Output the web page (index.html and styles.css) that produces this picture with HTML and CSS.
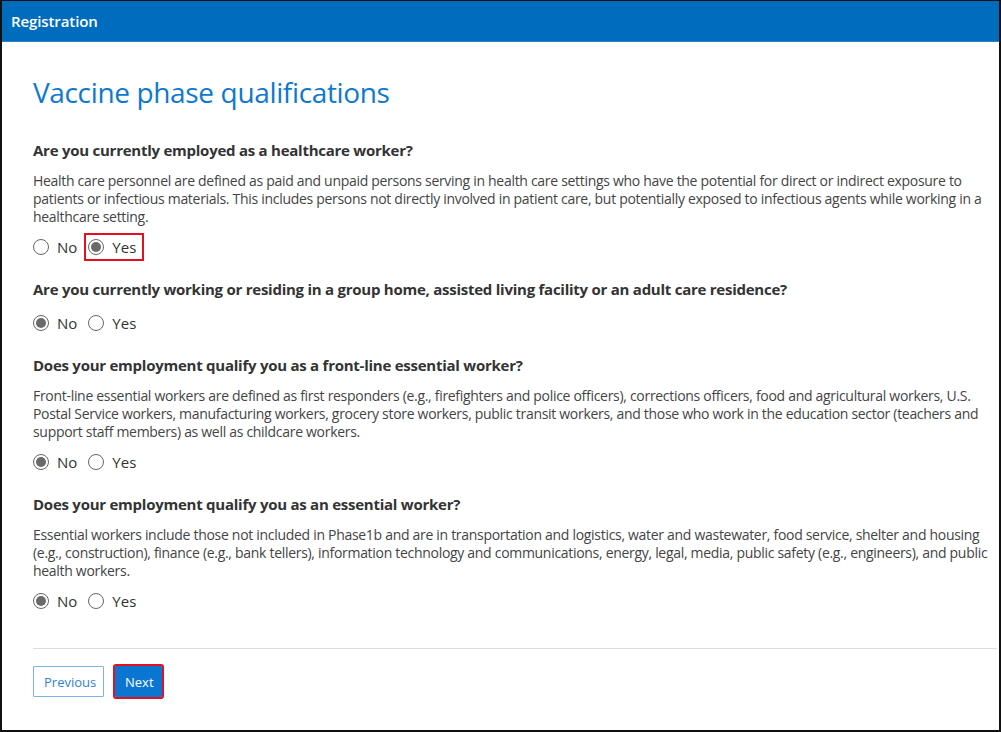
FILE: index.html
```html
<!DOCTYPE html>
<html lang="en">
<head>
<meta charset="utf-8">
<title>Registration</title>
<link rel="stylesheet" href="styles.css">
</head>
<body>
<div class="frame">
  <header class="topbar">Registration</header>
  <main class="content">
    <h1 class="title">Vaccine phase qualifications</h1>

    <section class="question">
      <h2 class="q-label">Are you currently employed as a healthcare worker?</h2>
      <p class="q-desc">Health care personnel are defined as paid and unpaid persons serving in health care settings who have the potential for direct or indirect exposure to patients or infectious materials. This includes persons not directly involved in patient care, but potentially exposed to infectious agents while working in a healthcare setting.</p>
      <div class="radios">
        <label class="radio"><span class="dot"></span>No</label>
        <label class="radio highlighted"><span class="dot checked"></span>Yes</label>
      </div>
    </section>

    <section class="question">
      <h2 class="q-label">Are you currently working or residing in a group home, assisted living facility or an adult care residence?</h2>
      <div class="radios">
        <label class="radio"><span class="dot checked"></span>No</label>
        <label class="radio"><span class="dot"></span>Yes</label>
      </div>
    </section>

    <section class="question">
      <h2 class="q-label">Does your employment qualify you as a front-line essential worker?</h2>
      <p class="q-desc">Front-line essential workers are defined as first responders (e.g., firefighters and police officers), corrections officers, food and agricultural workers, U.S. Postal Service workers, manufacturing workers, grocery store workers, public transit workers, and those who work in the education sector (teachers and support staff members) as well as childcare workers.</p>
      <div class="radios">
        <label class="radio"><span class="dot checked"></span>No</label>
        <label class="radio"><span class="dot"></span>Yes</label>
      </div>
    </section>

    <section class="question">
      <h2 class="q-label">Does your employment qualify you as an essential worker?</h2>
      <p class="q-desc">Essential workers include those not included in Phase1b and are in transportation and logistics, water and wastewater, food service, shelter and housing (e.g., construction), finance (e.g., bank tellers), information technology and communications, energy, legal, media, public safety (e.g., engineers), and public health workers.</p>
      <div class="radios">
        <label class="radio"><span class="dot checked"></span>No</label>
        <label class="radio"><span class="dot"></span>Yes</label>
      </div>
    </section>

    <div class="actions">
      <button class="btn btn-secondary" type="button">Previous</button>
      <button class="btn btn-primary highlighted-btn" type="button">Next</button>
    </div>
  </main>
</div>
</body>
</html>
```

FILE: styles.css
```css
* { box-sizing: border-box; }
html, body { margin: 0; padding: 0; background: #fff; }
body {
  font-family: "Open Sans", "Noto Sans", "Liberation Sans", sans-serif;
  color: #333;
}
.frame {
  width: 1001px;
  height: 732px;
  border: 2px solid #111;
  border-top-width: 1px;
  overflow: hidden;
  background: #fff;
}
.topbar {
  height: 41px;
  background: #006cbe;
  border-bottom: 1px solid #2a82cc;
  color: #fff;
  font-size: 15px;
  font-weight: 600;
  line-height: 40px;
  padding-left: 9px;
  letter-spacing: -0.1px;
}
.content {
  padding: 32px 2px 0 31px;
}
.title {
  margin: 0 0 30px;
  font-size: 28px;
  line-height: 36px;
  font-weight: 400;
  color: #0e78d0;
  letter-spacing: -0.35px;
}
.question { margin-bottom: 20px; }
.q-label {
  margin: 0 0 12px;
  font-size: 15px;
  line-height: 20px;
  font-weight: 700;
  color: #333;
  letter-spacing: -0.25px;
}
.q-desc {
  margin: 0 0 9px;
  font-size: 14px;
  line-height: 18px;
  color: #444;
  letter-spacing: -0.3px;
}
.radios {
  display: flex;
  gap: 11px;
  height: 24px;
  align-items: center;
}
.radio {
  position: relative;
  display: flex;
  align-items: center;
  gap: 8px;
  font-size: 15px;
  color: #333;
  letter-spacing: 0;
}
.dot {
  width: 16px;
  height: 16px;
  border: 1px solid #666;
  border-radius: 50%;
  background: #fff;
  display: inline-flex;
  align-items: center;
  justify-content: center;
}
.dot.checked::before {
  content: "";
  width: 10px;
  height: 10px;
  border-radius: 50%;
  background: #6a6a6a;
}
.highlighted::after {
  content: "";
  position: absolute;
  top: -4px;
  bottom: -4px;
  left: -4px;
  right: -8px;
  border: 2px solid #e3101e;
}
.actions {
  margin-top: 35px;
  border-top: 1px solid #dcdcdc;
  padding-top: 17px;
  display: flex;
  gap: 11px;
}
.btn {
  height: 31px;
  font-family: inherit;
  font-size: 13px;
  border-radius: 1px;
  padding: 0 10px;
  cursor: pointer;
}
.btn-secondary {
  width: 71px;
  background: #fff;
  color: #2f83d1;
  border: 1px solid #7db4e3;
}
.btn-primary {
  width: 47px;
  background: #0b76d1;
  color: #fff;
  border: none;
}
.highlighted-btn {
  outline: 2px solid #e3101e;
  outline-offset: 0;
}
```
